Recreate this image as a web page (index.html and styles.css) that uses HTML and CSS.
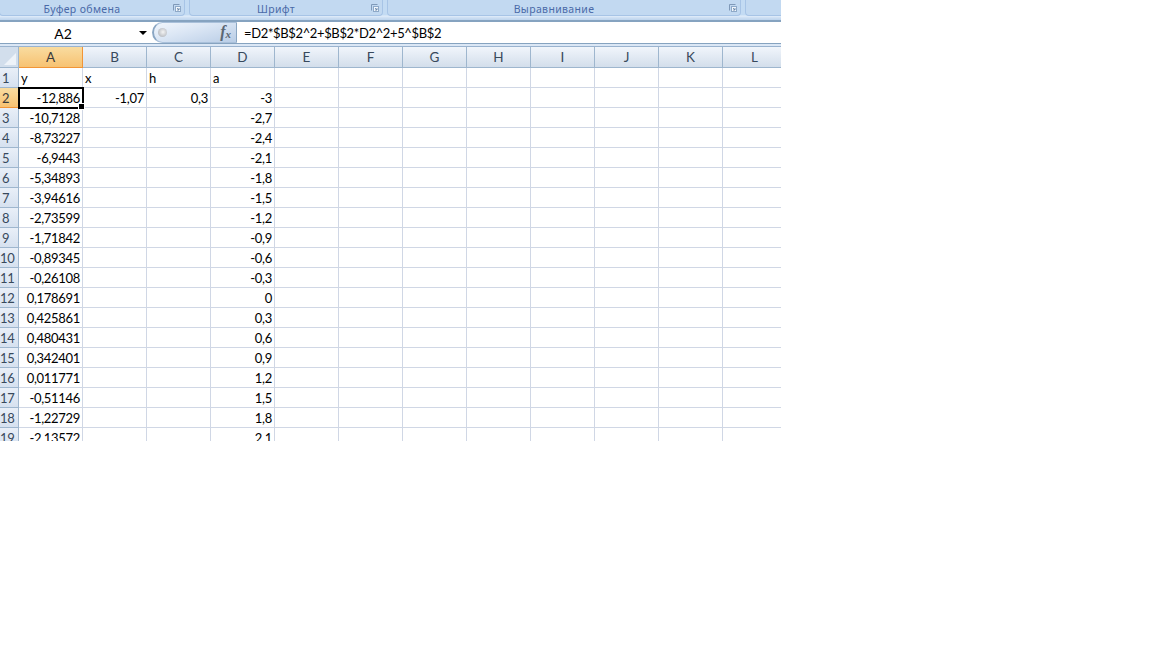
FILE: index.html
```html
<!DOCTYPE html>
<html lang="ru">
<head>
<meta charset="utf-8">
<title>Excel</title>
<link rel="stylesheet" href="styles.css">
</head>
<body>
<div class="app">
  <div class="ribbon">
    <div class="group g1"><span class="gname">Буфер обмена</span><svg class="launch" viewBox="0 0 8 8"><path d="M.5 6.5V.5h6" fill="none" stroke="#7f99b8"/><rect x="2.5" y="2.5" width="5" height="5" fill="#f2f7fc" stroke="#8ea9c8"/><path d="M4 4l2 2M6 4v2H4" fill="none" stroke="#5d7da3" stroke-width=".8"/></svg></div>
    <div class="group g2"><span class="gname">Шрифт</span><svg class="launch" viewBox="0 0 8 8"><path d="M.5 6.5V.5h6" fill="none" stroke="#7f99b8"/><rect x="2.5" y="2.5" width="5" height="5" fill="#f2f7fc" stroke="#8ea9c8"/><path d="M4 4l2 2M6 4v2H4" fill="none" stroke="#5d7da3" stroke-width=".8"/></svg></div>
    <div class="group g3"><span class="gname">Выравнивание</span><svg class="launch" viewBox="0 0 8 8"><path d="M.5 6.5V.5h6" fill="none" stroke="#7f99b8"/><rect x="2.5" y="2.5" width="5" height="5" fill="#f2f7fc" stroke="#8ea9c8"/><path d="M4 4l2 2M6 4v2H4" fill="none" stroke="#5d7da3" stroke-width=".8"/></svg></div>
    <div class="group g4"></div>
  </div>
  <div class="formulabar">
    <div class="namebox"><span class="nameval">A2</span><span class="arrow"></span></div>
    <div class="fxpill">
      <span class="ball"></span>
      <span class="fx">f<sub>x</sub></span>
    </div>
    <div class="formula">=D2*$B$2^2+$B$2*D2^2+5^$B$2</div>
  </div>
  <div class="sheet">
    <table class="grid">
      <colgroup><col class="chead"><col span="12" class="ccol"></colgroup>
      <tr class="hrow"><th class="corner"><span class="tri"></span></th><th class="on">A</th><th>B</th><th>C</th><th>D</th><th>E</th><th>F</th><th>G</th><th>H</th><th>I</th><th>J</th><th>K</th><th>L</th></tr>
      <tr><th class="rh">1</th><td class="t">y</td><td class="t">x</td><td class="t">h</td><td class="t">a</td><td></td><td></td><td></td><td></td><td></td><td></td><td></td><td></td></tr>
      <tr><th class="rh on">2</th><td class="sel">-12,886<span class="handle"></span></td><td>-1,07</td><td>0,3</td><td>-3</td><td></td><td></td><td></td><td></td><td></td><td></td><td></td><td></td></tr>
      <tr><th class="rh">3</th><td>-10,7128</td><td></td><td></td><td>-2,7</td><td></td><td></td><td></td><td></td><td></td><td></td><td></td><td></td></tr>
      <tr><th class="rh">4</th><td>-8,73227</td><td></td><td></td><td>-2,4</td><td></td><td></td><td></td><td></td><td></td><td></td><td></td><td></td></tr>
      <tr><th class="rh">5</th><td>-6,9443</td><td></td><td></td><td>-2,1</td><td></td><td></td><td></td><td></td><td></td><td></td><td></td><td></td></tr>
      <tr><th class="rh">6</th><td>-5,34893</td><td></td><td></td><td>-1,8</td><td></td><td></td><td></td><td></td><td></td><td></td><td></td><td></td></tr>
      <tr><th class="rh">7</th><td>-3,94616</td><td></td><td></td><td>-1,5</td><td></td><td></td><td></td><td></td><td></td><td></td><td></td><td></td></tr>
      <tr><th class="rh">8</th><td>-2,73599</td><td></td><td></td><td>-1,2</td><td></td><td></td><td></td><td></td><td></td><td></td><td></td><td></td></tr>
      <tr><th class="rh">9</th><td>-1,71842</td><td></td><td></td><td>-0,9</td><td></td><td></td><td></td><td></td><td></td><td></td><td></td><td></td></tr>
      <tr><th class="rh">10</th><td>-0,89345</td><td></td><td></td><td>-0,6</td><td></td><td></td><td></td><td></td><td></td><td></td><td></td><td></td></tr>
      <tr><th class="rh">11</th><td>-0,26108</td><td></td><td></td><td>-0,3</td><td></td><td></td><td></td><td></td><td></td><td></td><td></td><td></td></tr>
      <tr><th class="rh">12</th><td>0,178691</td><td></td><td></td><td>0</td><td></td><td></td><td></td><td></td><td></td><td></td><td></td><td></td></tr>
      <tr><th class="rh">13</th><td>0,425861</td><td></td><td></td><td>0,3</td><td></td><td></td><td></td><td></td><td></td><td></td><td></td><td></td></tr>
      <tr><th class="rh">14</th><td>0,480431</td><td></td><td></td><td>0,6</td><td></td><td></td><td></td><td></td><td></td><td></td><td></td><td></td></tr>
      <tr><th class="rh">15</th><td>0,342401</td><td></td><td></td><td>0,9</td><td></td><td></td><td></td><td></td><td></td><td></td><td></td><td></td></tr>
      <tr><th class="rh">16</th><td>0,011771</td><td></td><td></td><td>1,2</td><td></td><td></td><td></td><td></td><td></td><td></td><td></td><td></td></tr>
      <tr><th class="rh">17</th><td>-0,51146</td><td></td><td></td><td>1,5</td><td></td><td></td><td></td><td></td><td></td><td></td><td></td><td></td></tr>
      <tr><th class="rh">18</th><td>-1,22729</td><td></td><td></td><td>1,8</td><td></td><td></td><td></td><td></td><td></td><td></td><td></td><td></td></tr>
      <tr><th class="rh">19</th><td>-2,13572</td><td></td><td></td><td>2,1</td><td></td><td></td><td></td><td></td><td></td><td></td><td></td><td></td></tr>
    </table>
  </div>
</div>
</body>
</html>
```
FILE: styles.css
```css
html, body { margin: 0; padding: 0; background: #fff; }
.app { width: 781px; height: 441px; overflow: hidden; font-family: "Lato", "Liberation Sans", sans-serif; color: #000; background: #dbe7f5; }

.ribbon { height: 20px; display: flex; gap: 4px; background: linear-gradient(#c3dbf3 0, #c3dbf3 15px, #e3eefa 16px, #d4e4f6 17px, #bcd3ec 20px); }
.group { height: 16px; position: relative; display: flex; align-items: center; justify-content: center; box-sizing: border-box; border: 1px solid #a7c4e6; border-top: 0; border-radius: 0 0 4px 4px; background: #c2d9f1; }
.g1 { width: 186px; margin-left: -1px; }
.g2 { width: 194px; }
.g3 { width: 354px; }
.g4 { flex: 1; border-right: 0; border-radius: 0 0 0 4px; }
.gname { font-family: "Noto Sans", "DejaVu Sans", sans-serif; font-size: 10.5px; letter-spacing: 0.35px; color: #4a6aa8; padding-right: 20px; line-height: 16px; padding-top: 2px; }
.launch { position: absolute; right: 3px; top: 4px; width: 8px; height: 8px; }

.formulabar { height: 24px; display: flex; box-sizing: border-box; background: #fff; border-top: 2px solid #86a3c0; border-bottom: 1px solid #86a3c0; }
.namebox { width: 152px; display: flex; align-items: center; box-sizing: border-box; font-size: 14px; padding-top: 1px; }
.nameval { flex: 1; text-align: center; padding-right: 13px; }
.arrow { width: 0; height: 0; border: 4px solid transparent; border-top: 4px solid #000; border-bottom: 0; margin-right: 5px; }
.fxpill { width: 85px; height: 21px; box-sizing: border-box; display: flex; align-items: center; justify-content: space-between; border: 1px solid #8aa6c3; border-left-width: 2px; border-top-color: #a9c0da; border-bottom-color: #a9c0da; border-radius: 11px 0 0 11px; background: linear-gradient(165deg, #f1f6fc 0, #dce7f5 40%, #b9cde6 100%); padding: 0 4px 0 4px; }
.ball { width: 9px; height: 9px; border-radius: 50%; background: radial-gradient(circle at 55% 45%, #f4f4f4, #a4a9b1); }
.fx { font-family: "Liberation Serif", serif; font-style: italic; font-weight: bold; font-size: 16px; color: #5a6672; line-height: 14px; margin-bottom: 2px; margin-right: 1px; }
.fx sub { font-size: 11px; vertical-align: -1px; line-height: 0; }
.formula { flex: 1; font-size: 13px; letter-spacing: -0.36px; line-height: 22px; padding-left: 7px; white-space: nowrap; background: #fff; }

.sheet { margin-top: 2px; border-top: 1px solid #9ab3cf; background: #fff; }
.grid { border-collapse: separate; border-spacing: 0; table-layout: fixed; width: 787px; font-size: 13px; letter-spacing: -0.3px; }
.chead { width: 19px; }
.ccol { width: 64px; }
.grid tr { height: 20px; }
.grid .hrow { height: 21px; }
.grid th { font-weight: normal; padding: 0; color: #38495c; font-size: 13.5px; letter-spacing: 0; background: linear-gradient(#e9eff8, #d6e1ef); border-right: 1px solid #9eb6ce; border-bottom: 1px solid #9eb6ce; text-align: center; box-sizing: border-box; overflow: hidden; }
.grid th.rh { padding: 1px 7px 0 0; line-height: 18px; white-space: nowrap; font-size: 13px; letter-spacing: -0.3px; }
.hrow th { background: linear-gradient(#f1f5fb, #d3deeb); }
.grid th.on { background: linear-gradient(#f9dca0, #f7c272); border-right-color: #f29536; border-bottom-color: #f29536; color: #3a3a3a; }
.grid th.corner { position: relative; background: #d2deec; }
.tri { position: absolute; right: 2px; bottom: 2px; width: 0; height: 0; border-left: 12px solid transparent; border-bottom: 12px solid #eef3f9; }
.grid td { padding: 1px 2px 0 0; box-sizing: border-box; height: 20px; border-right: 1px solid #d0d7e5; border-bottom: 1px solid #d0d7e5; text-align: right; white-space: nowrap; overflow: hidden; line-height: 18px; color: #000; }
.grid td.t { text-align: left; padding: 1px 0 0 2px; }
.grid td.sel { position: relative; overflow: visible; outline: 2px solid #000; outline-offset: -1px; }
.handle { position: absolute; right: -3px; bottom: -3px; width: 5px; height: 5px; background: #000; border: 1px solid #fff; box-sizing: content-box; }
```
